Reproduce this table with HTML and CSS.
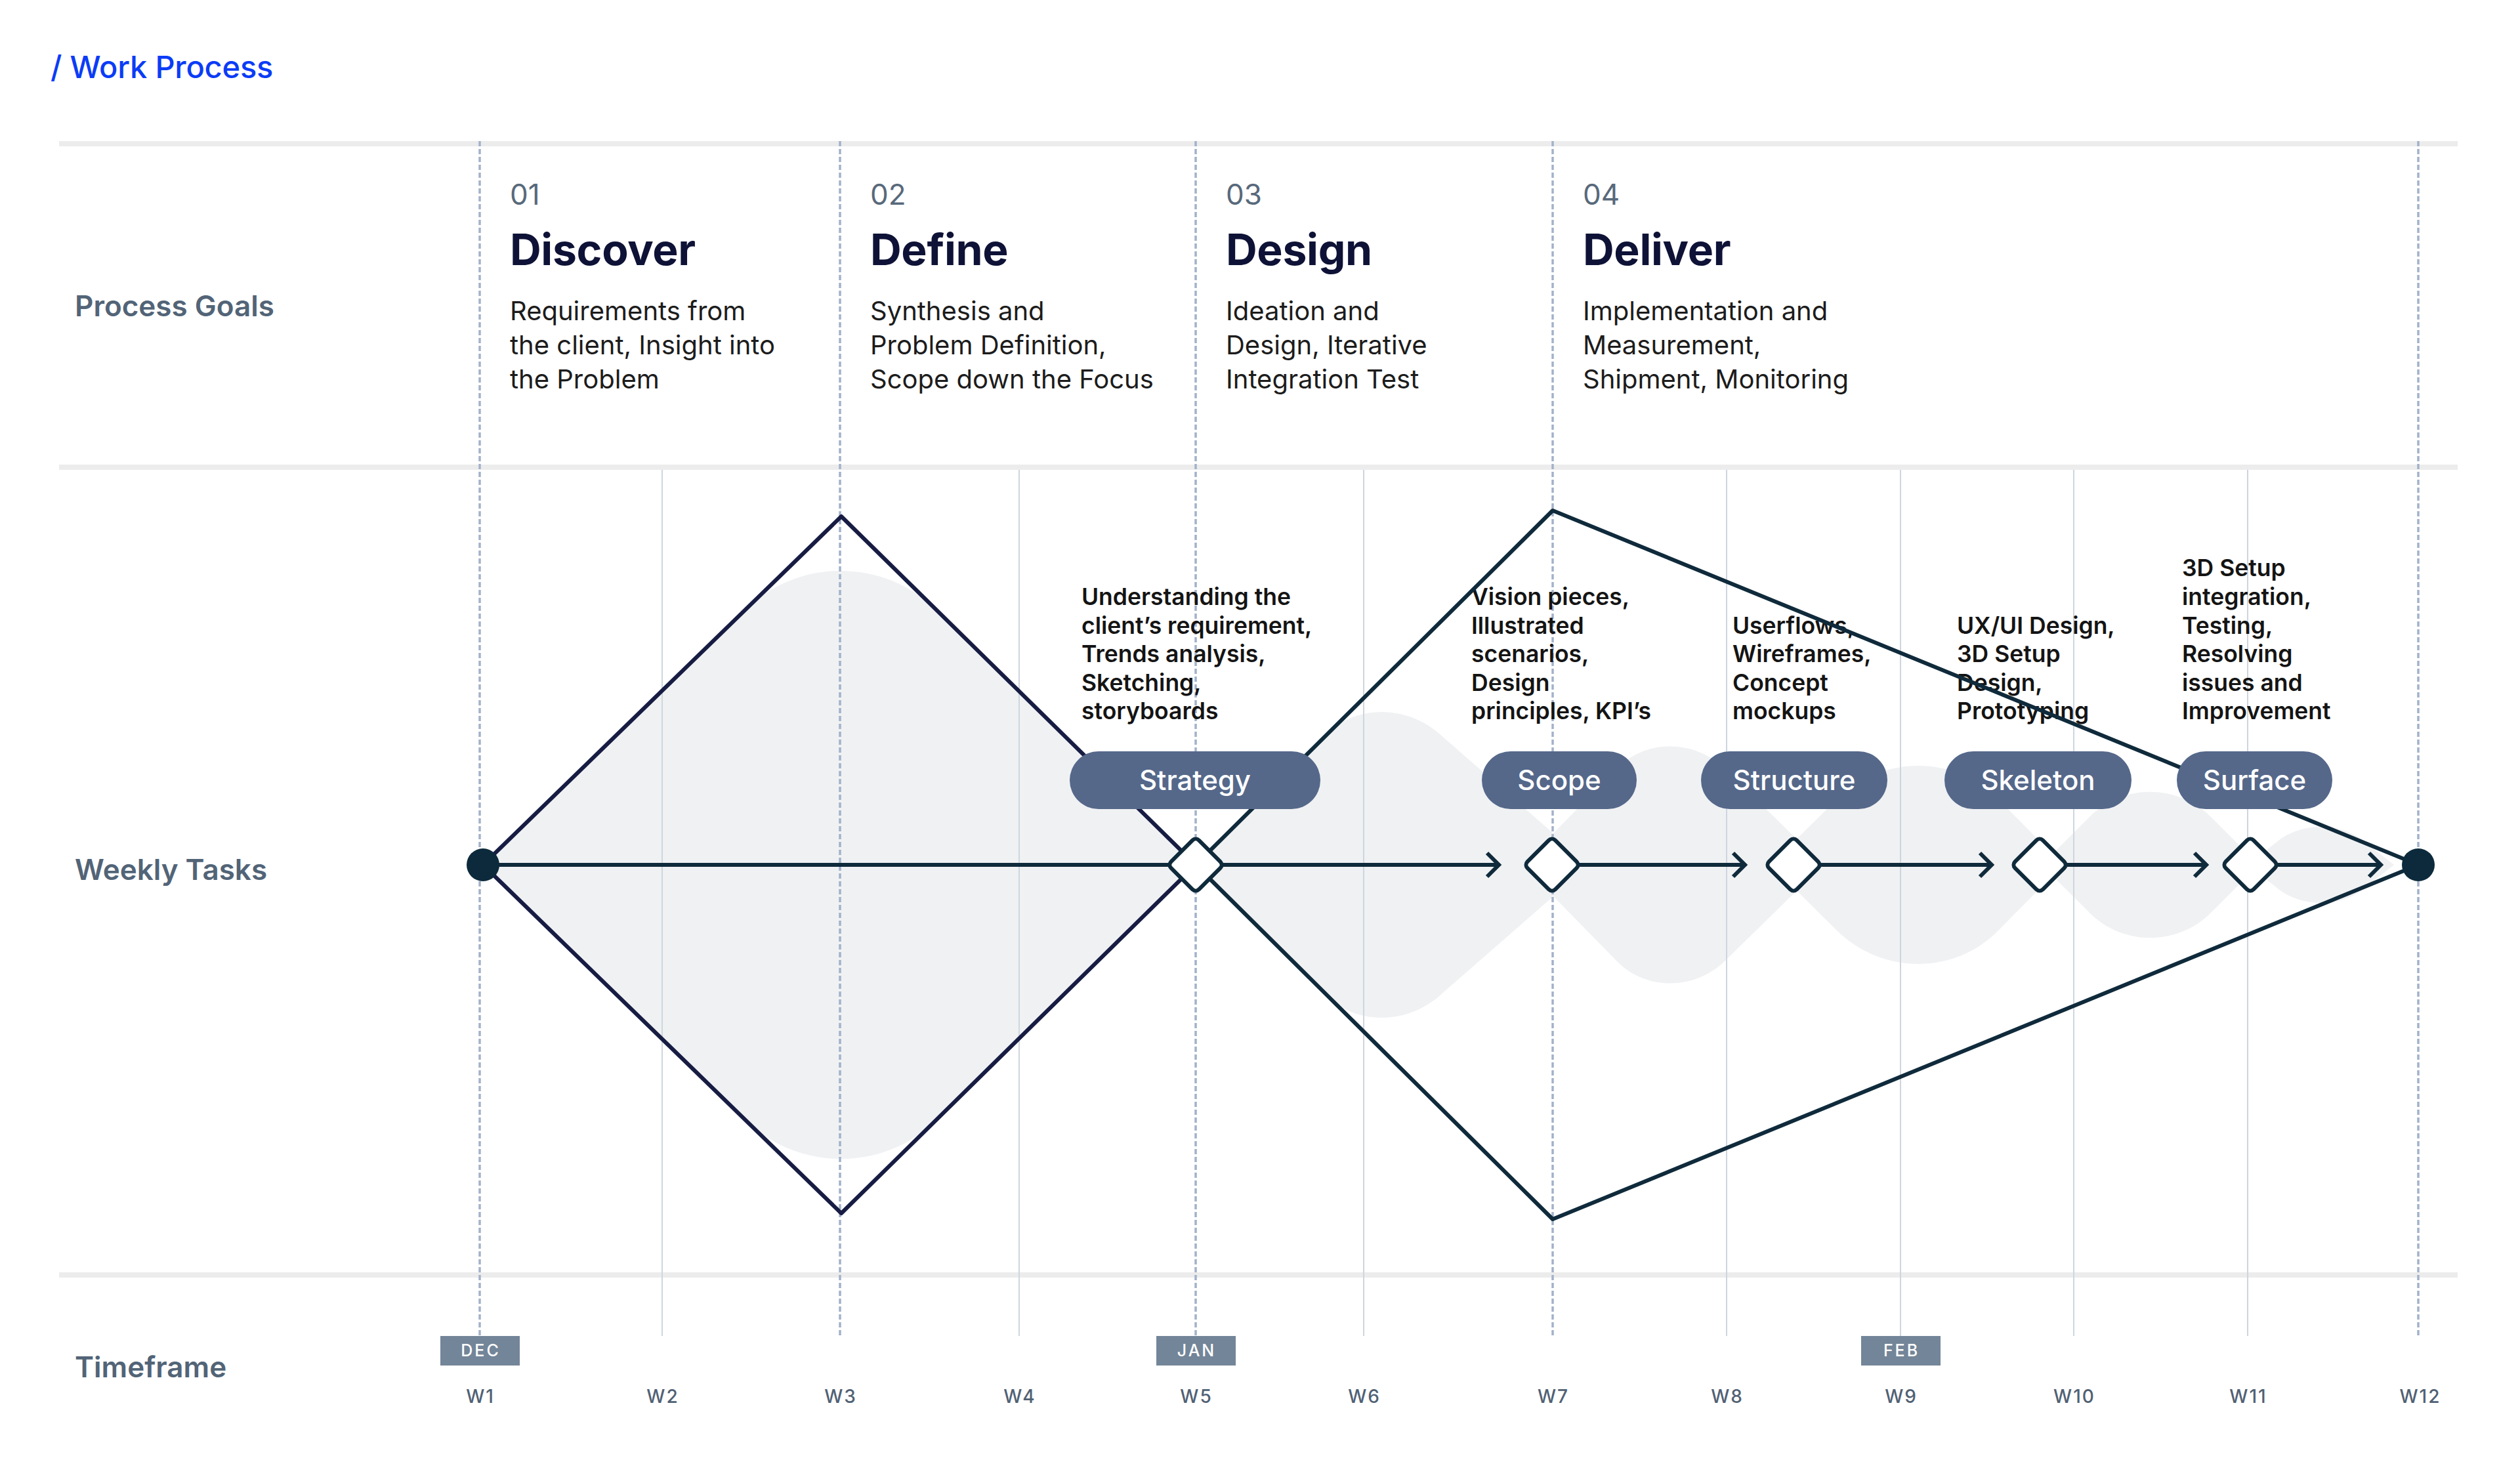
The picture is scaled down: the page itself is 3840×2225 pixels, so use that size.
FILE: index.html
```
<!DOCTYPE html>
<html lang="en">
<head>
<meta charset="utf-8">
<title>Work Process</title>
<link rel="stylesheet" href="styles.css">
</head>
<body>
<main class="page">
  <h1 class="title">/ Work Process</h1>
  <section class="board">
    <svg class="layer" viewBox="0 215 3840 2010" aria-hidden="true">
      <path class="blob" d="M736,1318 L1137,928 C1216.8,850.5 1346.5,850.5 1425.4,928 L1822,1318 L1425.4,1708 C1346.5,1785.5 1216.8,1785.5 1137,1708 Z"/>
      <path class="blob" d="M1822,1318 L2022,1118 C2066,1074 2143,1074 2193,1118 L2422,1318 L2193,1518 C2143,1562 2066,1562 2022,1518 Z"/>
      <path class="blob" d="M2320,1318 L2463,1172 C2507,1126 2582,1126 2629,1172 L2778,1318 L2629,1464 C2582,1510 2507,1510 2463,1464 Z"/>
      <path class="blob" d="M2698,1318 L2799,1218 C2868,1150 2979,1150 3045,1218 L3144,1318 L3045,1418 C2979,1486 2868,1486 2799,1418 Z"/>
      <path class="blob" d="M3111,1318 L3184,1245 C3235,1194 3318,1194 3369,1245 L3442,1318 L3369,1391 C3318,1442 3235,1442 3184,1391 Z"/>
      <path class="blob" d="M3425,1318 L3472,1281 C3508,1253 3566,1253 3601,1281 L3648,1318 L3601,1355 C3566,1383 3508,1383 3472,1355 Z"/>
      <g class="thin">
        <line x1="1009" y1="716" x2="1009" y2="2036"/>
        <line x1="1553" y1="716" x2="1553" y2="2036"/>
        <line x1="2078" y1="716" x2="2078" y2="2036"/>
        <line x1="2631" y1="716" x2="2631" y2="2036"/>
        <line x1="2896" y1="716" x2="2896" y2="2036"/>
        <line x1="3160" y1="716" x2="3160" y2="2036"/>
        <line x1="3425" y1="716" x2="3425" y2="2036"/>
      </g>
      <g class="dash">
        <line x1="731" y1="215" x2="731" y2="2036"/>
        <line x1="1280" y1="215" x2="1280" y2="2036"/>
        <line x1="1822" y1="215" x2="1822" y2="2036"/>
        <line x1="2366" y1="215" x2="2366" y2="2036"/>
        <line x1="3685" y1="215" x2="3685" y2="2036"/>
      </g>
    </svg>

    <div class="row row-goals">
      <div class="label">Process Goals</div>
      <div class="phase phase-1">
        <div class="num">01</div>
        <h2 class="name">Discover</h2>
        <p class="desc">Requirements from<br>the client, Insight into<br>the Problem</p>
      </div>
      <div class="phase phase-2">
        <div class="num">02</div>
        <h2 class="name">Define</h2>
        <p class="desc">Synthesis and<br>Problem Definition,<br>Scope down the Focus</p>
      </div>
      <div class="phase phase-3">
        <div class="num">03</div>
        <h2 class="name">Design</h2>
        <p class="desc">Ideation and<br>Design, Iterative<br>Integration Test</p>
      </div>
      <div class="phase phase-4">
        <div class="num">04</div>
        <h2 class="name">Deliver</h2>
        <p class="desc">Implementation and<br>Measurement,<br>Shipment, Monitoring</p>
      </div>
    </div>

    <div class="row row-tasks">
      <div class="label">Weekly Tasks</div>
    </div>

    <div class="row row-time">
      <div class="label label-time">Timeframe</div>
      <div class="axis">
        <span class="month m-dec">DEC</span>
        <span class="month m-jan">JAN</span>
        <span class="month m-feb">FEB</span>
        <span class="week">W1</span>
        <span class="week">W2</span>
        <span class="week">W3</span>
        <span class="week">W4</span>
        <span class="week">W5</span>
        <span class="week">W6</span>
        <span class="week">W7</span>
        <span class="week">W8</span>
        <span class="week">W9</span>
        <span class="week">W10</span>
        <span class="week">W11</span>
        <span class="week">W12</span>
      </div>
    </div>

    <div class="notes">
      <p class="note note-1">Understanding the<br>client’s requirement,<br>Trends analysis,<br>Sketching,<br>storyboards</p>
      <p class="note note-2">Vision pieces,<br>Illustrated<br>scenarios,<br>Design<br>principles, KPI’s</p>
      <p class="note note-3">Userflows,<br>Wireframes,<br>Concept<br>mockups</p>
      <p class="note note-4">UX/UI Design,<br>3D Setup<br>Design,<br>Prototyping</p>
      <p class="note note-5">3D Setup<br>integration,<br>Testing,<br>Resolving<br>issues and<br>Improvement</p>
    </div>

    <svg class="layer" viewBox="0 215 3840 2010" aria-hidden="true">
      <path class="d1" d="M736,1318 L1282,787 L1822,1318 L1282,1849 Z"/>
      <path class="d2" d="M1822,1318 L2366,778 L3685,1318 L2366,1858 Z"/>
      <path class="axis-line" d="M736,1318 H2284 M2365,1318 H2659 M2733,1318 H3035 M3108,1318 H3362 M3429,1318 H3628"/>
      <path class="arrow" d="M2266,1300 L2284,1318 L2266,1336 M2641,1300 L2659,1318 L2641,1336 M3017,1300 L3035,1318 L3017,1336 M3344,1300 L3362,1318 L3344,1336 M3610,1300 L3628,1318 L3610,1336"/>
    </svg>

    <div class="pills">
      <span class="pill pill-1">Strategy</span>
      <span class="pill pill-2">Scope</span>
      <span class="pill pill-3">Structure</span>
      <span class="pill pill-4">Skeleton</span>
      <span class="pill pill-5">Surface</span>
    </div>

    <svg class="layer" viewBox="0 215 3840 2010" aria-hidden="true">
      <circle class="dot" cx="736" cy="1318" r="25"/>
      <circle class="dot" cx="3685" cy="1318" r="25"/>
      <rect class="diamond" x="-30" y="-30" width="60" height="60" rx="7" transform="translate(1822 1318) rotate(45)"/>
      <rect class="diamond" x="-30" y="-30" width="60" height="60" rx="7" transform="translate(2365 1318) rotate(45)"/>
      <rect class="diamond" x="-30" y="-30" width="60" height="60" rx="7" transform="translate(2733 1318) rotate(45)"/>
      <rect class="diamond" x="-30" y="-30" width="60" height="60" rx="7" transform="translate(3108 1318) rotate(45)"/>
      <rect class="diamond" x="-30" y="-30" width="60" height="60" rx="7" transform="translate(3429 1318) rotate(45)"/>
    </svg>
  </section>
</main>
</body>
</html>
```

FILE: styles.css
```
* { box-sizing: border-box; }

html, body {
  margin: 0;
  padding: 0;
  background: #ffffff;
}

body {
  width: 3840px;
  height: 2225px;
  overflow: hidden;
  font-family: Inter, "Noto Sans", "Liberation Sans", sans-serif;
  color: #1a1a1a;
}

.page {
  position: relative;
  width: 3840px;
  height: 2225px;
}

.title {
  margin: 0;
  padding: 74px 0 0 77px;
  height: 130px;
  font-size: 47px;
  line-height: 56px;
  font-weight: 500;
  color: #0b3cf7;
  letter-spacing: -0.2px;
}

.board {
  position: relative;
  margin-top: 85px;
  width: 3840px;
  height: 2010px;
}

.layer {
  position: absolute;
  left: 0;
  top: 0;
  width: 3840px;
  height: 2010px;
  pointer-events: none;
}

.blob { fill: #f0f1f3; }

.thin line {
  stroke: #cdd6df;
  stroke-width: 2;
}

.dash line {
  stroke: #a3b2ca;
  stroke-width: 3.5;
  stroke-dasharray: 8 4;
}

.d1 {
  fill: none;
  stroke: #171c43;
  stroke-width: 6;
  stroke-linejoin: round;
}

.d2 {
  fill: none;
  stroke: #0f2a3b;
  stroke-width: 6;
  stroke-linejoin: round;
}

.axis-line {
  fill: none;
  stroke: #0f2a3b;
  stroke-width: 6;
}

.arrow {
  fill: none;
  stroke: #0f2a3b;
  stroke-width: 6;
  stroke-linejoin: miter;
}

.dot { fill: #0c2a3b; }

.diamond {
  fill: #ffffff;
  stroke: #0f2a3b;
  stroke-width: 6;
}

/* rows */
.row {
  display: flex;
  margin: 0 95px 0 90px;
  border-top: 8px solid #ececec;
}

.row-goals { height: 493px; }
.row-tasks { height: 1231px; }
.row-time { height: 278px; }

.label {
  flex: none;
  width: 641px;
  padding-left: 24px;
  display: flex;
  align-items: center;
  font-size: 44px;
  line-height: 52px;
  font-weight: 600;
  color: #526477;
}

.row-tasks .label {
  padding-bottom: 6px;
}

.label-time {
  width: 521px;
  padding-top: 2px;
}

/* phases */
.phase {
  flex: none;
  padding: 47px 0 0 46px;
}

.phase-1 { width: 549px; }
.phase-2 { width: 542px; }
.phase-3 { width: 544px; }
.phase-4 { flex: 1; }

.num {
  font-size: 44px;
  line-height: 52px;
  font-weight: 400;
  color: #58697b;
}

.name {
  margin: 18px 0 0;
  font-size: 66px;
  line-height: 80px;
  font-weight: 700;
  color: #0e1236;
  letter-spacing: -0.3px;
}

.desc {
  margin: 28px 0 0;
  font-size: 40px;
  line-height: 52px;
  font-weight: 400;
  color: #1c1c1c;
}

/* timeline axis */
.axis {
  flex: none;
  align-self: flex-start;
  display: grid;
  grid-template-columns: 240px 316px 226px 320px 218px 294px 282px 248px 282px 246px 284px 240px;
  grid-template-rows: 45px 34px;
  row-gap: 30px;
  padding-top: 89px;
  justify-items: center;
}

.month {
  grid-row: 1;
  width: 121px;
  height: 45px;
  background: #738598;
  color: #ffffff;
  font-size: 25px;
  line-height: 45px;
  font-weight: 500;
  letter-spacing: 3px;
  padding-left: 3px;
  text-align: center;
}

.m-dec { grid-column: 1; }
.m-jan { grid-column: 5; }
.m-feb { grid-column: 9; }

.week {
  grid-row: 2;
  font-size: 28px;
  line-height: 34px;
  font-weight: 500;
  letter-spacing: 2px;
  padding-left: 2px;
  color: #506174;
}

/* task notes (diagram nodes) */
.notes {
  position: absolute;
  left: 0;
  top: 0;
  width: 3840px;
  height: 891px;
}

.note {
  position: absolute;
  bottom: 0;
  margin: 0;
  font-size: 35.5px;
  line-height: 43.6px;
  font-weight: 600;
  color: #141414;
  white-space: nowrap;
}

.note-1 { left: 1648px; }
.note-2 { left: 2242px; }
.note-3 { left: 2640px; }
.note-4 { left: 2982px; }
.note-5 { left: 3325px; }

/* phase pills */
.pills {
  position: absolute;
  left: 0;
  top: 930px;
  width: 3840px;
  height: 88px;
}

.pill {
  position: absolute;
  top: 0;
  height: 88px;
  border-radius: 44px;
  background: #55688a;
  color: #ffffff;
  font-size: 42px;
  line-height: 88px;
  font-weight: 500;
  text-align: center;
}

.pill-1 { left: 1630px; width: 382px; }
.pill-2 { left: 2258px; width: 236px; }
.pill-3 { left: 2592px; width: 284px; }
.pill-4 { left: 2963px; width: 285px; }
.pill-5 { left: 3317px; width: 237px; }
```
